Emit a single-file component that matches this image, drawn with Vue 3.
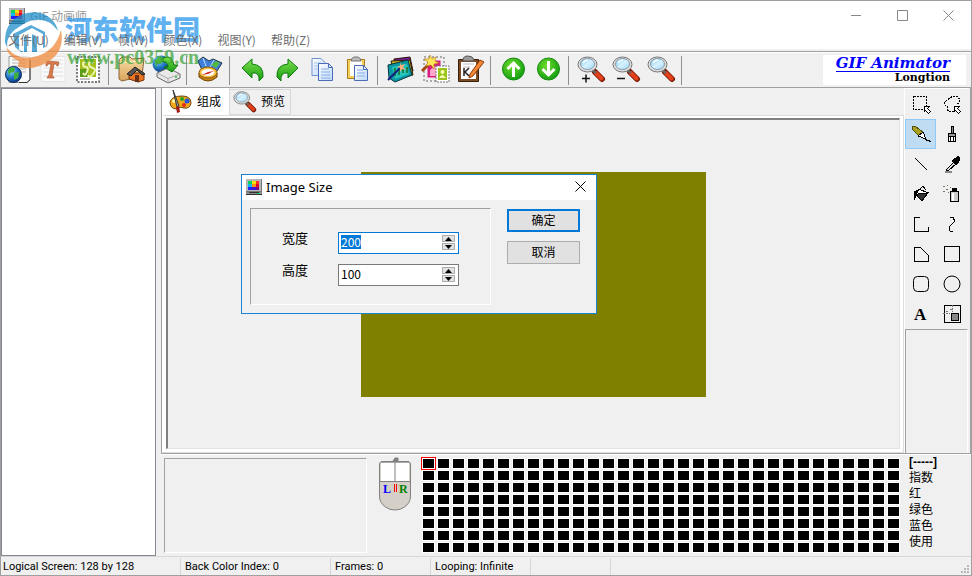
<script setup>
import { ref, onMounted } from 'vue'

const menus = ['文件(U)', '编辑(V)', '帧(W)', '颜色(X)', '视图(Y)', '帮助(Z)']
const toolbar = [
  ['new', 'text', 'stamp'],
  ['folder', 'drive'],
  ['compass'],
  ['undo', 'redo', 'copy', 'paste'],
  ['frames', 'wizard', 'edit'],
  ['up', 'down'],
  ['zoomin', 'zoomout', 'zoom']
]
const tools = [
  'select', 'lasso', 'pencil', 'brush', 'line', 'picker', 'bucket', 'spray',
  'polyline', 'curve', 'polygon', 'rect', 'roundrect', 'ellipse', 'letter', 'origin'
]
const tool = ref('pencil')
const info = ['[-----]', '指数', '红', '绿色', '蓝色', '使用']
const status = ['Logical Screen: 128 by 128', 'Back Color Index: 0', 'Frames: 0', 'Looping: Infinite', '', '']
const color = ref(1)
const width = ref(200)
const height = ref(100)
const widthBox = ref(null)

onMounted(() => {
  widthBox.value.focus()
  widthBox.value.select()
})
</script>

<template>
  <div class="window">
    <svg class="defs" aria-hidden="true">
      <defs>
        <linearGradient id="gGreen" x1="0" y1="0" x2="0" y2="1">
          <stop offset="0" stop-color="#7ce04a" /><stop offset="1" stop-color="#159a12" />
        </linearGradient>
        <radialGradient id="gBall" cx=".4" cy=".35" r=".7">
          <stop offset="0" stop-color="#6fdc2c" /><stop offset="1" stop-color="#0f9a10" />
        </radialGradient>
        <radialGradient id="gGlobe" cx=".35" cy=".3" r=".8">
          <stop offset="0" stop-color="#8fd4f4" /><stop offset=".5" stop-color="#1f78c8" /><stop offset="1" stop-color="#0a2a78" />
        </radialGradient>
        <linearGradient id="gLens" x1="0" y1="0" x2="1" y2="1">
          <stop offset="0" stop-color="#6cc4f6" /><stop offset=".5" stop-color="#d8f2ff" /><stop offset="1" stop-color="#9cd8fa" />
        </linearGradient>
        <linearGradient id="gPage" x1="0" y1="0" x2="1" y2="1">
          <stop offset="0" stop-color="#fff" /><stop offset="1" stop-color="#bcd8fa" />
        </linearGradient>
        <linearGradient id="gFolder" x1="0" y1="0" x2="0" y2="1">
          <stop offset="0" stop-color="#f7dda6" /><stop offset="1" stop-color="#d9a45c" />
        </linearGradient>
      </defs>
      <symbol id="magnifier" viewBox="0 0 29 29">
        <path d="M18 17 l7 7" stroke="#7a1c08" stroke-width="6" stroke-linecap="round" />
        <path d="M19 18 l5.500 5.500" stroke="#e4401c" stroke-width="4" stroke-linecap="round" />
        <path d="M15 15 l4 3" stroke="#666" stroke-width="2.500" />
        <ellipse cx="10.500" cy="9.500" rx="9.500" ry="7.500" fill="#ddd" stroke="#777" />
        <ellipse cx="10.500" cy="9" rx="7" ry="5.500" fill="url(#gLens)" stroke="#8a9aa8" />
        <path d="M6 8 q2 -3 5 -3" stroke="#fff" stroke-width="1.500" fill="none" />
      </symbol>
      <symbol id="monitor" viewBox="0 0 16 16">
        <path d="M0 0 h16 v13 h-16z" fill="#b8b8b8" />
        <path d="M15 0 h1 v13 h-16 v-1 h15z" fill="#777" />
        <path d="M2 2h4v3h-4z" fill="#10d060" /><path d="M6 2h4v3h-4z" fill="#f0e010" /><path d="M10 2h3v3h-3z" fill="#ff3020" />
        <path d="M2 5h4v3h-4z" fill="#10b8f0" /><path d="M6 5h4v3h-4z" fill="#ff9010" /><path d="M10 5h3v3h-3z" fill="#e00030" />
        <path d="M2 8h4v3h-4z" fill="#2020ff" /><path d="M6 8h4v3h-4z" fill="#4010e0" /><path d="M10 8h3v3h-3z" fill="#800080" />
        <path d="M0 13h16v3h-16z" fill="#8c8c8c" /><path d="M0 15h16v1h-16zM3 13h10v1h-10z" fill="#333" />
        <path d="M11 14h3v1h-3z" fill="#10e060" />
      </symbol>
    </svg>

    <header class="head">
      <div class="titlebar">
        <svg class="app-icon"><use href="#monitor" /></svg>
        <span class="app-name">GIF 动画师</span>
        <button class="cap" aria-label="Minimize"><svg viewBox="0 0 11 11"><path d="M0 5.500h10" /></svg></button>
        <button class="cap" aria-label="Maximize"><svg viewBox="0 0 11 11"><path d="M.5.5h10v10h-10z" /></svg></button>
        <button class="cap" aria-label="Close"><svg viewBox="0 0 11 11"><path d="M.5.5l10 10M10.500.5l-10 10" /></svg></button>
      </div>
      <nav class="menu"><button v-for="m in menus" :key="m">{{ m }}</button></nav>
    </header>

    <div class="toolbar">
      <div v-for="(group, gi) in toolbar" :key="gi" class="group">
        <button v-for="n in group" :key="n" :aria-label="n">
          <svg viewBox="0 0 29 29" fill="none">
            <template v-if="n === 'new'">
              <path d="M5 1.500h18q3 0 3 3v20l-3 3h-18z" fill="#fafafa" stroke="#9a9a9a" /><path d="M26 5v20l-3 2.500h-8" stroke="#333" />
              <path d="M8 5h14M8 8h14M8 11h14M15 14h7M18 17h4" stroke="#b8b8b8" />
              <circle cx="9.500" cy="19.500" r="8" fill="url(#gGlobe)" stroke="#0b2a5c" />
              <path d="M4 15q3-4 7-2l-1 4-4 1-1 3zM10 18l5-1-1 6-4 2z" fill="#3fae3a" />
            </template>
            <template v-else-if="n === 'text'">
              <path d="M2 1.500h24v25h-24z" fill="#fafafa" stroke="#e4e4e4" /><path d="M4 5h20M4 9h20M4 13h20M4 17h20M4 21h20" stroke="#dedede" />
              <path d="M7 9l1-3 12 1-1 4h-1l-1-2h-2l-2 12 2 1v1h-7l1-2 1-1 2-11h-3l-1 2h-1z" fill="#dd7a4c" stroke="#a0522d" stroke-width=".6" />
            </template>
            <template v-else-if="n === 'stamp'">
              <path d="M3 2h22v25h-22z" fill="#fff" stroke="#777" stroke-width="2" stroke-dasharray="2 1.500" />
              <path d="M4 3h20v23h-20z" fill="#fff" /><path d="M6 4h16v18h-16z" fill="#a5c01c" /><path d="M6 14h8v8h-8z" fill="#5d9c18" />
              <path d="M13 8q-4-2-4 1t3 3 1 5-4 1M19 8q-4-2-4 1t4 4 0 6-5 1" stroke="#eef5b4" stroke-width="2" />
              <path d="M6 24h10" stroke="#888" />
            </template>
            <template v-else-if="n === 'folder'">
              <path d="M2 5l3-3h8l2 2 12-1-2 18-20 5-3-2z" fill="url(#gFolder)" stroke="#8a6534" /><path d="M4 8l20-2" stroke="#fff0c4" />
              <path d="M12 18h15v7l-6 2-9-3z" fill="#e87422" stroke="#7b3208" /><path d="M10 19l8-7 10 7-3 1-5-5-6 6z" fill="#555" stroke="#222" />
              <path d="M18 20h4v7h-4z" fill="#66301a" />
            </template>
            <template v-else-if="n === 'drive'">
              <circle cx="9" cy="9" r="8.500" fill="url(#gGlobe)" /><path d="M3 5q5-5 9-2l-3 5-4 1-1 5z" fill="#49b637" />
              <path d="M5 18l11-5 12 6v4l-12 5-11-6z" fill="#e9e9e9" stroke="#666" /><path d="M5 18l11 5.500 12-4.500M16 24v4" stroke="#aaa" />
              <path d="M11 3q9-4 11 7h4l-6 7-8-5h4q0-6-5-5z" fill="url(#gGreen)" stroke="#087208" /><circle cx="24" cy="22" r="1" fill="#23b52a" />
            </template>
            <template v-else-if="n === 'compass'">
              <path d="M3 6l5-4 6 4 4-2 9 4-5 8-6-2-9 1z" fill="#3f7fdb" stroke="#234" /><path d="M8 3l3 8M19 5l-4 7" stroke="#bfe3ff" />
              <path d="M16 10l5-4 4 2-4 5z" fill="#52b944" />
              <path d="M4 18v4q9 8 18 0v-4z" fill="#c88314" stroke="#704200" />
              <ellipse cx="13" cy="17.500" rx="9" ry="5.500" fill="#f6bd3c" stroke="#8a5a0b" /><ellipse cx="13" cy="17.500" rx="6.500" ry="3.500" fill="#fff" />
              <path d="M7 20l6-3 6-1-6 3z" fill="#d42a1c" />
            </template>
            <path v-else-if="n === 'undo'" d="M4 13L14 4v5q12 1 11 13l-4 4q1-9-7-8v5z" fill="url(#gGreen)" stroke="#0c7a12" />
            <path v-else-if="n === 'redo'" d="M25 13L15 4v5q-12 1-11 13l4 4q-1-9 7-8v5z" fill="url(#gGreen)" stroke="#0c7a12" />
            <template v-else-if="n === 'copy'">
              <path d="M4 3.500h9l4 4v13h-13z" fill="url(#gPage)" stroke="#7090d0" /><path d="M6 8h7M6 11h7M6 14h7" stroke="#a8c4ec" />
              <path d="M10.500 8.500h10l4 4v13h-14z" fill="url(#gPage)" stroke="#4a6cb8" /><path d="M20.500 8.500v4h4" stroke="#4a6cb8" /><path d="M13 14h8M13 17h9M13 20h9M13 23h9" stroke="#86ace4" />
            </template>
            <template v-else-if="n === 'paste'">
              <path d="M4.500 4.500h17v19h-17z" fill="#f4cf58" stroke="#a77b20" /><path d="M7 6h12v15h-12z" fill="#fff" /><path d="M8 6q0-3 3-4h4q3 1 3 4z" fill="#bbb" stroke="#777" />
              <path d="M11.500 10.500h9l4 4v11h-13z" fill="url(#gPage)" stroke="#4a6cb8" /><path d="M20.500 10.500v4h4" stroke="#4a6cb8" /><path d="M14 15h6M14 18h8M14 21h8" stroke="#86ace4" />
            </template>
            <template v-else-if="n === 'frames'">
              <path d="M8 4l16-2 3 14-17 6z" fill="#7c199c" stroke="#210" /><path d="M5 6l19-1 3 15-18 4z" fill="#c9b21c" stroke="#332200" />
              <path d="M2 10l20-5 4 15-17 7-6-4z" fill="#0b98a4" stroke="#06363c" /><path d="M6 12l15-3 2 10-14 5z" fill="#25c5bd" />
              <path d="M9 13v8M13 12v8M17 13v5M21 12v6" stroke="#176d20" stroke-width="1.500" /><path d="M2 25L16 11" stroke="#112080" stroke-width="2" /><path d="M14 7l1 3 4-1-2 3 3 3-4-1-2 3v-4l-3-1 3-1z" fill="#ffac76" />
            </template>
            <template v-else-if="n === 'wizard'">
              <path d="M5 4h16v20h-16z" fill="#d71b80" stroke="#eee" stroke-width="3" /><path d="M3 2h20v24h-20z" stroke="#666" stroke-dasharray="2 2" />
              <path d="M9 21v-6l5-4 4 4v6z" fill="#ffa8cc" /><path d="M16 12h11v14h-11z" fill="#9ac31c" stroke="#fff" stroke-width="2" /><path d="M15 11h13v16h-13z" stroke="#777" stroke-dasharray="2 1" />
              <circle cx="21.500" cy="17" r="2" fill="#f5ffb2" /><path d="M18 23q3-6 7 0z" fill="#f5ffb2" />
              <path d="M1 16L9 8" stroke="#a44711" stroke-width="3" /><path d="M9 0l2 4 4-2-1 4 4 2-5 1v5l-3-4-5 1 2-4-4-3 5 0z" fill="#ffe65a" stroke="#b57d09" stroke-width=".6" />
            </template>
            <template v-else-if="n === 'edit'">
              <path d="M2.500 4.500h20v22h-20z" fill="#7c4b24" stroke="#36200c" /><path d="M5 7h15v17h-15z" fill="#fff" /><path d="M7 5q0-4 5-4t6 4v1h-11z" fill="#999" stroke="#555" />
              <path d="M7 9h11M7 12h7" stroke="#bbb" /><path d="M8 13v8M13 13l-4 4 4 4" stroke="#222" stroke-width="1.500" />
              <path d="M14 19L24 5l4 2-11 14-4 2z" fill="#f18735" stroke="#8c3906" />
            </template>
            <template v-else-if="n === 'up' || n === 'down'">
              <circle cx="14.500" cy="14" r="11" fill="url(#gBall)" stroke="#168b12" />
              <path v-if="n === 'up'" d="M14.500 22V8M8.500 14l6-6 6 6" stroke="#fff" stroke-width="3" />
              <path v-else d="M14.500 6v14M8.500 14l6 6 6-6" stroke="#fff" stroke-width="3" />
            </template>
            <template v-else>
              <use href="#magnifier" />
              <path v-if="n === 'zoomin'" d="M5 23.500h8M9 19.500v8" stroke="#111" stroke-width="1.500" />
              <path v-if="n === 'zoomout'" d="M5 23.500h8" stroke="#111" stroke-width="1.500" />
            </template>
          </svg>
        </button>
      </div>
      <a class="brand" href="#"><span class="brand-name">GIF Animator</span><span class="brand-maker">Longtion</span></a>
    </div>

    <div class="body">
      <aside class="frame-list"></aside>
      <div class="work">
        <div class="upper">
          <section class="tabs">
            <div class="tab-row">
              <button class="tab active">
                <svg class="tab-icon" viewBox="0 0 24 24">
                  <path d="M1 12q2-6 12-6 9 0 9 7-1 6-7 5-4-2-7 1-7 0-7-7z" fill="#f0a81c" stroke="#6d4104" />
                  <circle cx="13" cy="9" r="2" fill="#28a428" /><circle cx="18" cy="11" r="2.500" fill="#2456e0" /><circle cx="15" cy="15" r="2" fill="#e02818" /><circle cx="5" cy="11" r="2" fill="#fff0a0" />
                  <path d="M4 0l6 16-2 1z" fill="#aaa" stroke="#333" /><path d="M7 17l3-1 1 6-3 1z" fill="#a31b18" />
                </svg>组成
              </button>
              <button class="tab">
                <svg class="tab-icon"><use href="#magnifier" /></svg>预览
              </button>
            </div>
            <div class="page"><div class="stage"><div class="canvas"></div></div></div>
          </section>

          <section class="tools">
            <div class="tool-grid">
              <button v-for="t in tools" :key="t" :class="{ on: t === tool }" :aria-label="t" @click="tool = t">
                <svg viewBox="0 0 20 20" fill="none" stroke="#000" shape-rendering="crispEdges">
                  <template v-if="t === 'select'"><path d="M2.500 2.500h13v13h-13z" stroke-dasharray="2 1" /><path d="M13 12.500h5.500l-2 2 3 3-2 2-3-3-1.500 1.500z" fill="#fff" /></template>
                  <template v-else-if="t === 'lasso'"><path d="M8 3.500l3-1h4l3 3-1 3-2 2M12 17.500h-5l-2-2v-3l-3-2 1-3 3-2 2-2" stroke-dasharray="2 1" /><path d="M12 12.500h5.500l-2 2 3 3-2 2-3-3-1.500 1.500z" fill="#fff" /></template>
                  <template v-else-if="t === 'pencil'"><path d="M1 3l3-1 8 6-1 4-4-1-6-6z" fill="#a8a020" stroke="#555010" /><path d="M7 12l5-4 3 7z" fill="#fff" /><path d="M13 14l2 2h3v1h3" /></template>
                  <template v-else-if="t === 'brush'"><path d="M9 2h2v7h-2z" fill="#888" /><path d="M6.500 9.500h7v3h-7z" fill="#999" /><path d="M6.500 12.500h7v5h-7zM8.500 13v4M11 13v4" fill="#fff" /></template>
                  <path v-else-if="t === 'line'" d="M4 4l12 12" />
                  <template v-else-if="t === 'picker'"><path d="M3 18h7" stroke="#888" stroke-width="2" /><path d="M4 16l8-8 2 2-8 7z" fill="#ddd" /><path d="M10 7l4 4 4-5q0-4-3-3z" fill="#000" /></template>
                  <template v-else-if="t === 'bucket'"><path d="M3 16v-8l4-2 2 2-4 4z" fill="#000" /><path d="M8 5l9 4-6 8-6-6z" fill="#fff" /><path d="M7 10l10-1-6 8-5-5z" fill="#333" /><path d="M8 6l4-4 3 4" /></template>
                  <template v-else-if="t === 'spray'"><path d="M1 2h2M5 1h1M4 5h2M8 3h1M1 7h2M6 8h1" stroke="#776" /><path d="M8.500 7.500h8v10h-8z" fill="#ccc" /><path d="M10 4h4v3h-4z" fill="#000" /><path d="M11 9v8" stroke="#fff" stroke-width="2" /></template>
                  <path v-else-if="t === 'polyline'" d="M8.500 3.500h-5v14h14v-5" />
                  <path v-else-if="t === 'curve'" d="M8 3h3v2h1v3l-2 2-2 2-1 3 1 2h3" />
                  <path v-else-if="t === 'polygon'" d="M3.500 3.500h6l8 8v6h-14z" />
                  <path v-else-if="t === 'rect'" d="M2.500 2.500h15v15h-15z" />
                  <rect v-else-if="t === 'roundrect'" x="2.500" y="2.500" width="15" height="15" rx="4" shape-rendering="auto" />
                  <circle v-else-if="t === 'ellipse'" cx="10" cy="10" r="8" shape-rendering="auto" />
                  <template v-else-if="t === 'origin'"><path d="M2.500 1.500h16v17h-16z" /><path d="M1 9h7M10 1v7M4 7h3M8 5h3" stroke="#777" stroke-dasharray="2 1" /><path d="M9.500 9.500h7v7h-7z" fill="#888" /></template>
                  <text v-else x="3" y="16" class="letter">A</text>
                </svg>
              </button>
            </div>
            <div class="tool-options"></div>
          </section>
        </div>

        <div class="lower">
          <div class="preview"></div>
          <svg class="mouse" viewBox="0 0 34 56" fill="none">
            <path d="M1.500 7q0-2 2-2h27q2 0 2 2v32q0 7-6 11-4 3-9.500 3t-9.500-3q-6-4-6-11z" fill="#d4d0c8" stroke="#808080" />
            <path d="M3 6h28v18h-28z" fill="#fff" /><path d="M1 24.500h32M17 5v19M3 4.500h28" stroke="#808080" />
            <path d="M15 4l2-3h3v3z" fill="#808080" stroke="#808080" />
            <text x="5" y="36" fill="#00f">L</text><path d="M16 27v8M18 27v8" stroke="#f00" shape-rendering="crispEdges" /><text x="21" y="36" fill="green">R</text>
          </svg>
          <div class="palette">
            <button v-for="i in 256" :key="i" :class="{ on: i === color }" :aria-label="'Color ' + (i - 1)" @click="color = i"></button>
          </div>
          <ul class="info"><li v-for="t in info" :key="t">{{ t }}</li></ul>
        </div>
      </div>
    </div>

    <footer class="status">
      <span v-for="(s, i) in status" :key="i">{{ s }}</span>
      <svg class="grip" viewBox="0 0 9 9"><path d="M6 0h2v2h-2zM3 3h2v2h-2zM6 3h2v2h-2zM0 6h2v2h-2zM3 6h2v2h-2zM6 6h2v2h-2z" /></svg>
    </footer>

    <form class="dialog" role="dialog" aria-label="Image Size" @submit.prevent>
      <div class="dialog-title">
        <svg class="app-icon"><use href="#monitor" /></svg>
        <span>Image Size</span>
        <button type="button" class="close" aria-label="Close dialog"><svg viewBox="0 0 11 11"><path d="M.5.5l10 10M10.500.5l-10 10" /></svg></button>
      </div>
      <div class="dialog-body">
        <div class="fields">
          <label for="w">宽度</label>
          <div class="spin">
            <input id="w" ref="widthBox" v-model.number="width" type="text" inputmode="numeric">
            <div class="arrows">
              <button type="button" aria-label="Increase width" @click="width++"><svg viewBox="0 0 7 4"><path d="M0 4L3.500 0 7 4z" /></svg></button>
              <button type="button" aria-label="Decrease width" @click="width--"><svg viewBox="0 0 7 4"><path d="M0 0h7L3.500 4z" /></svg></button>
            </div>
          </div>
          <label for="h">高度</label>
          <div class="spin">
            <input id="h" v-model.number="height" type="text" inputmode="numeric">
            <div class="arrows">
              <button type="button" aria-label="Increase height" @click="height++"><svg viewBox="0 0 7 4"><path d="M0 4L3.500 0 7 4z" /></svg></button>
              <button type="button" aria-label="Decrease height" @click="height--"><svg viewBox="0 0 7 4"><path d="M0 0h7L3.500 4z" /></svg></button>
            </div>
          </div>
        </div>
        <div class="actions">
          <button type="submit" class="ok">确定</button>
          <button type="button">取消</button>
        </div>
      </div>
    </form>

    <div class="watermark">
      <svg viewBox="0 0 58 58">
        <path d="M0 29Q0 9 18 2 38-4 49 10q3 4 4 9-8-8-15-7Q28 4 18 14 8 16 4 27l-1 8q-3-2-3-6z" fill="#1f8ecb" />
        <path d="M2 33Q2 22 14 15 22 9 30 8 44 6 53 19q4 14-8 21-14 8-29 6Q6 44 2 33z" fill="#fff" />
        <path d="M8 22l18-9 14 7v15l-8 5h-16l-6-5z" fill="#1f8ecb" />
        <path d="M14 23l13-7 11 6v16l-6 3V25l-5-3v18h-5V23l-3 2v15l-5-2z" fill="#fff" />
        <path d="M1 35q10 13 27 10 22-4 28-27 4 21-12 31-14 10-31 6l1-6Q4 46 1 35z" fill="#f08a3c" />
      </svg>
      <div class="mark-text"><span class="mark-name">河东软件园</span><span class="mark-url">www.pc0359.cn</span></div>
    </div>
  </div>
</template>

<style>
body { background: #f0f0f0; }
</style>

<style scoped>
* { box-sizing: border-box; }
button { font: inherit; color: inherit; background: none; border: 0; padding: 0; margin: 0; }
svg { display: block; }
.defs { position: absolute; width: 0; height: 0; }
.window {
  position: relative; display: flex; flex-direction: column; min-height: 100vh;
  border: 1px solid #a0a0a0; background: #f0f0f0; color: #000;
  font: 12px/16px "Liberation Sans", "Noto Sans CJK SC", sans-serif;
}
.head { background: #fff; height: 48px; font-family: "Noto Sans CJK SC", sans-serif; }
.titlebar { display: flex; align-items: center; height: 29px; padding-left: 8px; color: #999; }
.app-icon { width: 16px; height: 16px; flex: none; }
.app-name { margin-left: 5px; margin-right: auto; }
.cap { width: 46px; height: 28px; display: grid; place-items: center; }
.cap svg { width: 11px; height: 11px; }
.cap path, .close path { fill: none; stroke: #888; }
.menu { position: relative; z-index: 2; display: flex; gap: 15px; padding-left: 7px; height: 19px; align-items: center; color: #6d6d6d; }
.toolbar { display: flex; margin-top: 2px; height: 37px; border-top: 1px solid #a0a0a0; border-bottom: 1px solid #a0a0a0; box-shadow: inset 0 1px #fff; flex: none; }
.group { display: flex; }
.group::after { content: ""; width: 1px; margin: 4px 5px 2px 2px; background: #909090; }
.group button { width: 35px; display: grid; place-items: center; }
.group svg { width: 29px; height: 29px; }
.brand {
  display: flex; flex-direction: column; align-items: flex-end; margin: 3px 5px 2px auto; width: 143px; padding: 1px 16px 0 0;
  background: #fff; color: #000; text-decoration: none; font-family: "DejaVu Serif", serif; font-weight: bold;
}
.brand-name { color: #00f; font-style: italic; font-size: 15px; line-height: 15px; border-bottom: 1px solid #00f; white-space: nowrap; }
.brand-maker { font-size: 11px; line-height: 12px; }
.body { flex: 1; display: flex; gap: 5px; min-height: 0; }
.frame-list { width: 155px; background: #fff; border: 1px solid #828790; flex: none; }
.work { flex: 1; display: flex; flex-direction: column; min-width: 0; }
.upper { flex: 1; display: flex; border-left: 1px solid #a0a0a0; border-bottom: 1px solid #a0a0a0; box-shadow: 0 1px #fff; }
.tabs { flex: 1; display: flex; flex-direction: column; border-left: 1px solid #fff; }
.tab-row { display: flex; align-items: flex-end; height: 27px; }
.tab { display: flex; align-items: center; gap: 4px; width: 61px; height: 26px; padding-left: 3px; border: 1px solid #d9d9d9; border-left: 0; }
.tab.active { width: 67px; height: 27px; padding-left: 6px; gap: 4px; background: #fff; border: 0; border-right: 1px solid #d9d9d9; }
.tab-icon { width: 24px; height: 24px; flex: none; }
.page { flex: 1; display: flex; padding: 2px 3px 3px 3px; background: #fff; border: 1px solid #dcdcdc; border-left: 0; }
.stage { flex: 1; display: grid; place-items: center; background: #f0f0f0; border: 1px solid #a0a0a0; border-top: 2px solid #808080; border-left: 2px solid #808080; border-right-color: #e3e3e3; border-bottom-color: #e3e3e3; }
.canvas { width: 345px; height: 225px; background: #808000; }
.tools { width: 67px; display: flex; flex-direction: column; border-left: 1px solid #fff; border-right: 1px solid #a0a0a0; padding-right: 2px; }
.tool-grid { display: grid; grid-template-columns: repeat(2, 31px); grid-auto-rows: 30px; border-top: 1px solid #fff; }
.tool-grid button { display: grid; place-items: center; border: 1px solid transparent; }
.tool-grid button.on { background: #c0dcf3; border-color: #90c8f6; }
.tool-grid svg { width: 20px; height: 20px; }
.letter { font: bold 17px "Liberation Serif", serif; fill: #000; stroke: none; }
.tool-options { flex: 1; border: 1px solid #a0a0a0; border-bottom: 0; border-right-color: #fff; }
.lower { display: flex; align-items: flex-start; height: 102px; padding: 4px 0 0 3px; }
.preview { width: 203px; height: 95px; border: 1px solid #a0a0a0; border-right-color: #fff; border-bottom-color: #fff; flex: none; }
.mouse { width: 34px; height: 56px; margin: -1px 10px 0 11px; flex: none; }
.mouse text { font: bold 12px "Liberation Serif", serif; }
.palette { display: grid; grid-template-columns: repeat(32, 13px); grid-auto-rows: 11px; gap: 1px 2px; }
.palette button { background: #000; border: 1px solid #fff; }
.palette button.on { outline: 1px solid #f00; }
.info { list-style: none; margin: -4px 0 0 9px; padding: 0; line-height: 16px; white-space: nowrap; }
.info li:first-child { font-weight: bold; }
.status { display: flex; height: 19px; border-top: 1px solid #d7d7d7; font: 11px/18px Roboto, sans-serif; padding-top: 1px; flex: none; }
.status span { width: 100px; padding-left: 4px; border-right: 1px solid #d7d7d7; white-space: nowrap; }
.status span:first-child { width: 180px; padding-left: 2px; }
.status span:nth-child(2) { width: 150px; }
.status span:nth-child(5) { width: 80px; }
.status span:nth-child(6) { flex: 1; border: 0; }
.grip { width: 9px; height: 9px; align-self: flex-end; fill: #b8b8b8; margin: 0 1px 1px 0; }
.dialog { position: absolute; left: 240px; top: 173px; width: 356px; border: 1px solid #1883d7; background: #f0f0f0; }
.dialog-title { display: flex; align-items: center; height: 25px; padding: 0 0 2px 4px; background: #fff; font: 13px/18px "Noto Sans", sans-serif; }
.dialog-title span { margin: 0 auto 0 4px; }
.close { width: 31px; height: 23px; display: grid; place-items: center; }
.close svg { width: 11px; height: 11px; }
.close path { stroke: #000; }
.dialog-body { display: flex; align-items: flex-start; gap: 16px; padding: 8px; }
.fields {
  display: grid; grid-template-columns: 56px 121px; grid-auto-rows: 22px; row-gap: 10px; width: 241px; height: 97px; padding: 23px 0 0 31px;
  border: 1px solid #a0a0a0; border-right-color: #fff; border-bottom-color: #fff;
}
.fields label { font-size: 13px; line-height: 13px; }
.spin { display: flex; background: #fff; border: 1px solid #7a7a7a; padding: 2px 3px 3px 2px; }
.spin:focus-within { border-color: #0078d7; }
.spin input { flex: 1; min-width: 0; height: 14px; border: 0; padding: 0; outline: 0; background: none; font: 12px/14px "Noto Sans CJK SC", sans-serif; color: #000; }
.spin input::selection { background: #0078d7; color: #fff; }
.arrows { display: grid; gap: 1px; grid-template-rows: 7px 7px; }
.arrows button { width: 13px; display: grid; place-items: center; background: #e1e1e1; border: 1px solid #adadad; }
.arrows svg { width: 7px; height: 4px; }
.actions { display: grid; gap: 9px; padding-top: 1px; }
.actions button { width: 73px; height: 23px; background: #e1e1e1; border: 1px solid #adadad; padding-top: 1px; }
.actions .ok { border: 2px solid #0078d7; }
.watermark { position: absolute; z-index: 1; left: 4px; top: 11px; display: flex; gap: 2px; pointer-events: none; opacity: .75; }
.watermark svg { width: 58px; height: 58px; }
.mark-text { display: flex; flex-direction: column; white-space: nowrap; }
.mark-name { font: 900 27px/34px "Noto Sans CJK SC", sans-serif; color: #2b98ec; }
.mark-url { font: bold 20px/22px "Liberation Serif", serif; color: #3fa53f; padding-left: 2px; }
</style>
